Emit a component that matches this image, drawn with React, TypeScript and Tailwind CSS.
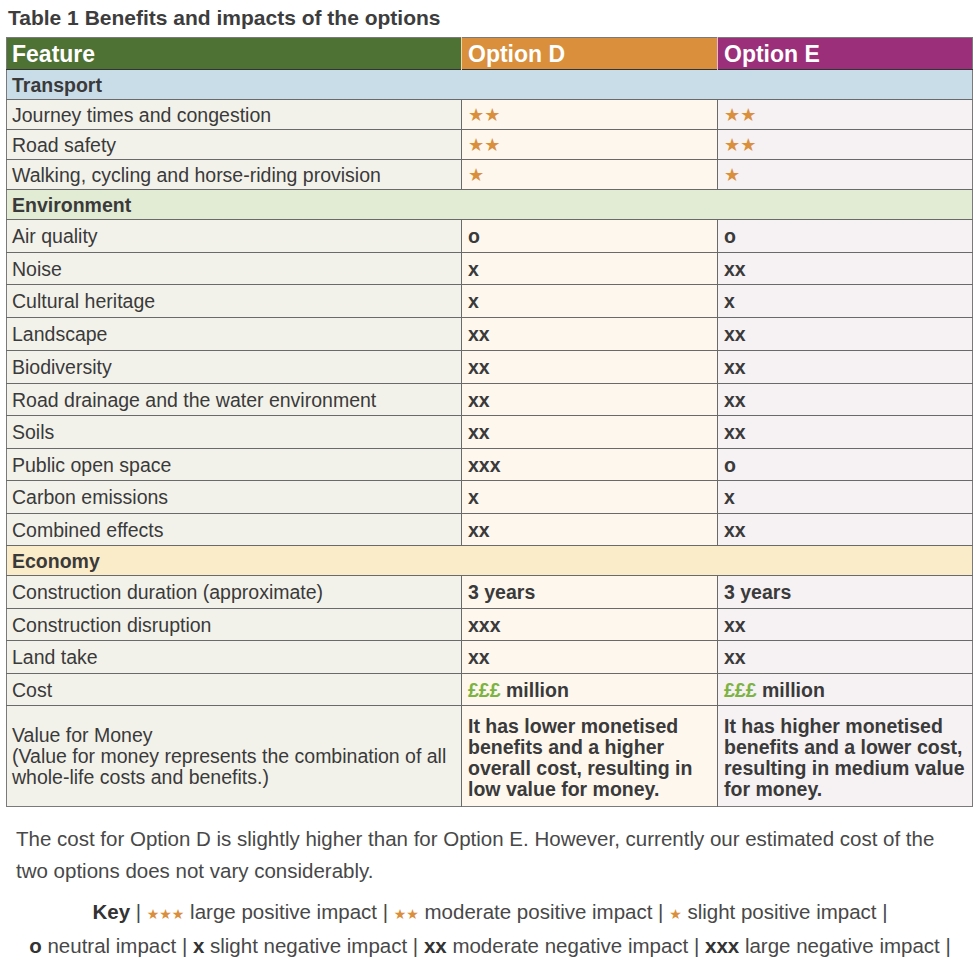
type Row =
  | { kind: "section"; label: string; bg: string }
  | { kind: "item"; label: React.ReactNode; d: React.ReactNode; e: React.ReactNode; h: string };

const Stars = ({ n }: { n: number }) => (
  <span className="text-[#d98f3c] text-[18px] font-['DejaVu_Sans',sans-serif]">{"★".repeat(n)}</span>
);

const Money = () => (
  <span>
    <span className="text-[#7cb342]">£££</span> million
  </span>
);

const rows: Row[] = [
  { kind: "section", label: "Transport", bg: "bg-[#c9dde9]" },
  { kind: "item", label: "Journey times and congestion", d: <Stars n={2} />, e: <Stars n={2} />, h: "h-[30px]" },
  { kind: "item", label: "Road safety", d: <Stars n={2} />, e: <Stars n={2} />, h: "h-[30px]" },
  { kind: "item", label: "Walking, cycling and horse-riding provision", d: <Stars n={1} />, e: <Stars n={1} />, h: "h-[30px]" },
  { kind: "section", label: "Environment", bg: "bg-[#e2ebd4]" },
  { kind: "item", label: "Air quality", d: "o", e: "o", h: "h-[33px]" },
  { kind: "item", label: "Noise", d: "x", e: "xx", h: "h-[32px]" },
  { kind: "item", label: "Cultural heritage", d: "x", e: "x", h: "h-[33px]" },
  { kind: "item", label: "Landscape", d: "xx", e: "xx", h: "h-[33px]" },
  { kind: "item", label: "Biodiversity", d: "xx", e: "xx", h: "h-[33px]" },
  { kind: "item", label: "Road drainage and the water environment", d: "xx", e: "xx", h: "h-[32px]" },
  { kind: "item", label: "Soils", d: "xx", e: "xx", h: "h-[33px]" },
  { kind: "item", label: "Public open space", d: "xxx", e: "o", h: "h-[32px]" },
  { kind: "item", label: "Carbon emissions", d: "x", e: "x", h: "h-[33px]" },
  { kind: "item", label: "Combined effects", d: "xx", e: "xx", h: "h-[32px]" },
  { kind: "section", label: "Economy", bg: "bg-[#fbecc9]" },
  { kind: "item", label: "Construction duration (approximate)", d: "3 years", e: "3 years", h: "h-[33px]" },
  { kind: "item", label: "Construction disruption", d: "xxx", e: "xx", h: "h-[32px]" },
  { kind: "item", label: "Land take", d: "xx", e: "xx", h: "h-[33px]" },
  { kind: "item", label: "Cost", d: <Money />, e: <Money />, h: "h-[32px]" },
];

export default function App() {
  return (
    <div className="w-[980px] bg-white text-[#3a3a3a] font-['Liberation_Sans',Arial,sans-serif]">
      <h1 className="pl-2 pt-[6px] h-[37px] text-[21px] font-bold text-[#3d3d3d] leading-[24px]">
        Table 1 Benefits and impacts of the options
      </h1>

      <table className="ml-[6px] w-[966px] table-fixed border-collapse border border-[#7a7a7a] text-[19.5px] leading-[22px]">
        <colgroup>
          <col className="w-[455px]" />
          <col className="w-[256px]" />
          <col className="w-[255px]" />
        </colgroup>
        <thead>
          <tr className="h-[32px] text-white text-[23px] font-bold border-b border-[#333]">
            <th className="bg-[#4e7233] text-left pl-[5px]">Feature</th>
            <th className="bg-[#d98f3c] text-left pl-[6px] border-l border-[#f3d2a8]">Option D</th>
            <th className="bg-[#9b2f7a] text-left pl-[6px] border-l border-[#e9b8d6]">Option E</th>
          </tr>
        </thead>
        <tbody>
          {rows.map((r, i) =>
            r.kind === "section" ? (
              <tr key={i} className={`h-[30px] border-b border-[#6a6a6a] ${r.bg}`}>
                <td colSpan={3} className="pl-[5px] font-bold text-[#3a3a3a]">
                  {r.label}
                </td>
              </tr>
            ) : (
              <tr key={i} className={`${r.h} border-b border-[#6a6a6a]`}>
                <td className="bg-[#f2f2ea] pl-[5px] border-r border-[#6a6a6a]">{r.label}</td>
                <td className="bg-[#fdf7ee] pl-[6px] font-bold border-r border-[#6a6a6a]">{r.d}</td>
                <td className="bg-[#f6f1f3] pl-[6px] font-bold">{r.e}</td>
              </tr>
            )
          )}
          <tr className="h-[101px] border-t border-[#333]">
            <td className="bg-[#f2f2ea] pl-[5px] pt-[8px] border-r border-[#6a6a6a] align-top leading-[21px]">
              <div className="pt-[11px]">Value for Money</div>
              <div>(Value for money represents the combination of all whole-life costs and benefits.)</div>
            </td>
            <td className="bg-[#fdf7ee] pl-[6px] pr-2 pt-[10px] font-bold border-r border-[#6a6a6a] align-top leading-[21px]">
              It has lower monetised benefits and a higher overall cost, resulting in low value for money.
            </td>
            <td className="bg-[#f6f1f3] pl-[6px] pr-[2px] pt-[10px] font-bold align-top leading-[21px]">
              It has higher monetised benefits and a lower cost, resulting in medium value for money.
            </td>
          </tr>
        </tbody>
      </table>

      <p className="pl-4 pr-10 pt-[16px] text-[20.5px] leading-[32px] text-[#484848]">
        The cost for Option D is slightly higher than for Option E. However, currently our estimated cost of the two
        options does not vary considerably.
      </p>

      <div className="pt-[9px] text-center text-[20.5px] leading-[31px] text-[#484848]">
        <div>
          <b className="text-[#333]">Key</b> |{" "}
          <span className="text-[#d98f3c] text-[14px] font-['DejaVu_Sans',sans-serif]">★★★</span> large positive impact |{" "}
          <span className="text-[#d98f3c] text-[14px] font-['DejaVu_Sans',sans-serif]">★★</span> moderate positive impact |{" "}
          <span className="text-[#d98f3c] text-[14px] font-['DejaVu_Sans',sans-serif]">★</span> slight positive impact |
        </div>
        <div>
          <b className="text-[#333]">o</b> neutral impact | <b className="text-[#333]">x</b> slight negative impact |{" "}
          <b className="text-[#333]">xx</b> moderate negative impact | <b className="text-[#333]">xxx</b> large negative impact |
        </div>
      </div>
    </div>
  );
}
